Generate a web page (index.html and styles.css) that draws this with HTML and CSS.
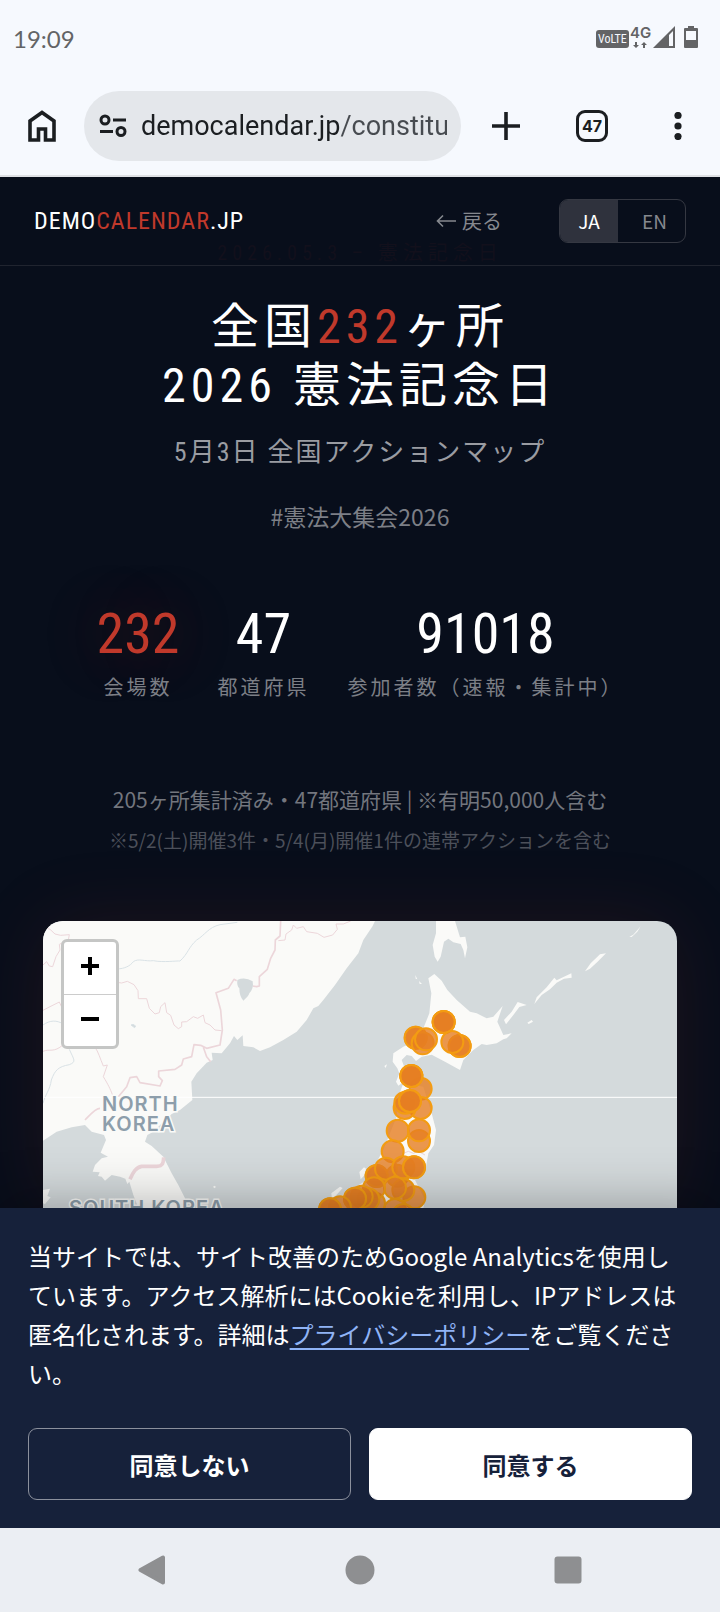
FILE: index.html
```html
<!DOCTYPE html>
<html lang="ja">
<head>
<meta charset="utf-8">
<meta name="viewport" content="width=device-width, initial-scale=1">
<title>全国232ヶ所 2026 憲法記念日</title>
<link rel="stylesheet" href="styles.css">
</head>
<body>
<div class="status">
  <span class="clock">19:09</span>
  <svg class="status-icons" width="104" height="28" viewBox="0 0 104 28" aria-hidden="true">
    <rect x="0" y="5" width="33" height="18" rx="3" fill="#636466"/>
    <text class="volte" x="2" y="18">VoLTE</text>
    <text class="net" x="34" y="13">4G</text>
    <path d="M39 17v3h-2l3 3 3-3h-2v-3zM47 23v-3h-2l3-3 3 3h-2v3z" fill="#636466"/>
    <path d="M57 23 79 1v22z" fill="#636466"/><path d="M73 10l4-4v15h-4z" fill="#f6f9fe"/>
    <path d="M92 1h6v2h3q1 0 1 1v18q0 1-1 1H89q-1 0-1-1V4q0-1 1-1h3z" fill="#636466"/><path d="M90 6h10v9h-10z" fill="#f6f9fe"/>
  </svg>
</div>
<div class="toolbar">
  <button class="tool" aria-label="ホーム"><svg width="28" height="32" viewBox="0 0 28 32"><path d="M2 30V11L14 2.500 26 11v19h-8.500V19h-7v11z" fill="none" stroke="#1b1e21" stroke-width="3.600"/></svg></button>
  <div class="omnibox">
    <svg width="28" height="24" viewBox="0 0 28 24" fill="none" stroke="#1b1e21" stroke-width="3" aria-hidden="true"><circle cx="6" cy="6" r="4"/><path d="M14 6h13M1 17.500h13"/><circle cx="22" cy="17.500" r="4"/></svg>
    <input class="url" aria-label="アドレス" value="democalendar.jp/constitution">
  </div>
  <button class="tool" aria-label="新しいタブ"><svg width="28" height="28" viewBox="0 0 28 28"><path d="M14 0v28M0 14h28" stroke="#1b1e21" stroke-width="3.600"/></svg></button>
  <button class="tool" aria-label="タブ"><span class="tabs">47</span></button>
  <button class="tool" aria-label="メニュー"><svg width="8" height="28" viewBox="0 0 8 28" fill="#1b1e21"><circle cx="4" cy="3.500" r="3.600"/><circle cx="4" cy="14" r="3.600"/><circle cx="4" cy="24.500" r="3.600"/></svg></button>
</div>

<header class="site-header">
  <a class="logo" href="#">DEMO<span class="red">CALENDAR</span>.JP</a>
  <a class="back" href="#"><svg width="20" height="14" viewBox="0 0 20 14" aria-hidden="true"><path d="M20 7H2M7 1.500 1.500 7 7 12.500" fill="none" stroke="currentColor" stroke-width="1.600"/></svg>戻る</a>
  <div class="lang">
    <button class="lang-btn active">JA</button>
    <button class="lang-btn">EN</button>
  </div>
</header>

<main class="page">
  <p class="eyebrow">2026.05.3 – 憲法記念日</p>
  <h1 class="title">全国<span class="red">232</span>ヶ所<br>2026 憲法記念日</h1>
  <p class="subtitle">5月3日 全国アクションマップ</p>
  <p class="hashtag">#憲法大集会2026</p>
  <div class="stats">
    <div class="stat"><span class="num red glow">232</span><span class="label">会場数</span></div>
    <div class="stat"><span class="num">47</span><span class="label">都道府県</span></div>
    <div class="stat"><span class="num">91018</span><span class="label">参加者数（速報・集計中）</span></div>
  </div>
  <p class="note">205ヶ所集計済み・47都道府県 | ※有明50,000人含む</p>
  <p class="note small">※5/2(土)開催3件・5/4(月)開催1件の連帯アクションを含む</p>

  <section class="map">
    <svg class="map-art" viewBox="39 33 1902 861" preserveAspectRatio="xMidYMin slice" role="img" aria-label="全国アクションマップ">
      <defs><circle id="pin" r="33" fill="#e67e22" fill-opacity=".8" stroke="#f39c12" stroke-width="6"/></defs>
      <rect x="39" y="33" width="1902" height="861" fill="#d4dadc"/>
      <path class="land" d="M39 33H1035L1028 48 1000 90 985 130 950 175 915 225 880 270 865 288 850 295 830 330 800 365 760 390 720 412 690 423 670 412 640 408 638 376 622 390 612 378 600 400 575 430 545 428 548 450 530 458 500 490 484 515 487 570 450 600 425 612 400 635 370 665 352 675 345 695 365 708 400 740 425 790 445 825 465 865V894H325L310 855 298 815 292 822 286 806 270 800 245 795 225 812 215 800 204 798 209 787 188 785 195 765 215 745 234 740 212 728 228 690 222 675 185 665 165 645 125 652 80 665 39 692ZM39 840 60 836 52 858 62 862 45 882 39 880ZM549 830l5-3 4 4-5 4z"/>
      <g transform="translate(990 0)">
        <path class="land" d="M228 33 228 70 218 105 224 140 233 155 242 140 252 95 265 86 280 97 302 102 310 120 315 145 322 112 316 80 300 82 285 33ZM223 192 205 205 214 250 208 310 190 355 175 390 130 410 100 430 98 455 112 475 118 490 108 515 115 527 132 515 140 490 125 450 140 435 155 438 168 453 185 440 215 434 255 455 300 480 310 450 340 420 365 402 380 405 410 400 430 388 440 385 455 370 430 375 412 335 428 288 400 320 380 325 350 310 330 305 290 270 262 240 245 212ZM438 343 432 330 455 305 473 276 500 285 478 291 460 315ZM523 282 530 262 560 232 583 203 590 211 634 190 635 203 612 206 590 218 570 238 545 255ZM675 184 692 160 720 133 738 130 712 156 690 176ZM808 80 820 74 842 49 832 65 815 81ZM502 338 515 330 519 335 506 342ZM166 195 172 208 167 206ZM177 213 186 222 179 222ZM73 468 81 463 77 474ZM12 772-2 786 2 808 14 795 18 776ZM-86 850-60 830-52 834-66 850-84 868Z"/>
        <path class="land" d="M130 520 190 530 215 610 228 660 222 705 205 730 198 770 165 810 195 870 190 894H-110L-60 860 20 810 70 720 110 620 115 560Z"/>
      </g>
      <g class="river"><path d="M260 177C285 176 300 168 310 155 325 144 345 155 370 152 400 158 440 152 450 153 475 130 475 112 500 90 525 75 535 52 570 44L622 37M39 345C60 330 80 330 100 342M118 418C132 450 140 455 118 464 85 470 75 480 64 510 60 540 45 555 39 580"/><path d="M303 345l6-2 8 5-3 5-6-4z" fill="#d4dadc"/></g>
      <g class="border">
        <path d="M39 50 60 58 75 72 92 76 118 74 115 90 88 103 90 120 78 140 68 170 58 168 50 155 39 165M260 217 275 219 292 214 312 224 324 242 325 266 350 266 358 295 375 312 388 308 392 290 405 278 410 308 422 316 432 345 445 356 455 350 455 336 470 335 490 320 503 325 520 315 525 338 540 345 555 360 575 362M39 301 60 290 88 276 100 302M39 424C60 415 70 430 100 404M195 412C205 425 210 445 220 468L232 465 220 500C235 525 240 535 248 556M745 92 765 90 768 72 785 60 790 45 800 55 820 50 830 65 862 70 882 82 908 75 922 58 918 42 940 42 962 33M1120 730 1135 724 1150 730 1165 724 1185 735"/>
        <path stroke-width="5" d="M752 33 750 78 736 90 735 120 722 145 712 178 688 200 688 228 680 230 668 228M620 212 612 208 595 235 558 248 572 300 577 360 570 405 530 415 512 406 492 404 485 440 460 447 455 465 435 478 386 483 386 500 397 512 390 528 330 518 320 500 300 503 290 530 265 560M520 412 530 440 542 455M210 595C195 595 180 615 165 630"/>
        <path stroke-width="11" d="M300 808C310 785 318 772 335 769H380C400 768 400 758 401 742"/>
      </g>
      <path d="M622 210Q645 200 668 214 672 235 658 250 655 260 640 272 628 260 628 235 620 228 622 210Z" fill="#d4dadc"/>
      <path d="M39 562H1941" stroke="#fff" stroke-width="3"/>
      <g class="country"><text x="216" y="603">NORTH</text><text x="216" y="662">KOREA</text><text x="117" y="914">SOUTH KOREA</text></g>
      <g transform="translate(990 0)">
        <use href="#pin" x="251" y="336"/><use href="#pin" x="251" y="336"/><use href="#pin" x="251" y="336"/>
        <use href="#pin" x="167" y="383"/><use href="#pin" x="167" y="383"/><use href="#pin" x="188" y="400"/><use href="#pin" x="198" y="388"/>
        <use href="#pin" x="299" y="408"/><use href="#pin" x="299" y="408"/><use href="#pin" x="277" y="396"/>
        <use href="#pin" x="182" y="536"/><use href="#pin" x="154" y="498"/><use href="#pin" x="154" y="498"/><use href="#pin" x="154" y="498"/>
        <use href="#pin" x="182" y="594"/><use href="#pin" x="134" y="594"/><use href="#pin" x="136" y="578"/><use href="#pin" x="150" y="573"/><use href="#pin" x="150" y="573"/>
        <use href="#pin" x="113" y="662"/><use href="#pin" x="177" y="693"/><use href="#pin" x="177" y="661"/><use href="#pin" x="98" y="724"/>
        <use href="#pin" x="112" y="797"/><use href="#pin" x="50" y="798"/><use href="#pin" x="50" y="798"/><use href="#pin" x="78" y="776"/><use href="#pin" x="130" y="772"/><use href="#pin" x="162" y="772"/><use href="#pin" x="162" y="772"/>
        <use href="#pin" x="163" y="862"/><use href="#pin" x="130" y="840"/><use href="#pin" x="105" y="833"/><use href="#pin" x="42" y="880"/><use href="#pin" x="42" y="835"/><use href="#pin" x="25" y="868"/><use href="#pin" x="5" y="860"/><use href="#pin" x="-15" y="866"/><use href="#pin" x="-15" y="866"/>
        <use href="#pin" x="-60" y="892"/><use href="#pin" x="-90" y="898"/><use href="#pin" x="-90" y="898"/><use href="#pin" x="105" y="900"/><use href="#pin" x="130" y="915"/>
      </g>
    </svg>
    <div class="zoom">
      <button class="zoom-btn" aria-label="拡大"><svg width="20" height="20" viewBox="0 0 20 20"><path d="M10 1v18M1 10h18" stroke="#000" stroke-width="4"/></svg></button>
      <button class="zoom-btn" aria-label="縮小"><svg width="20" height="20" viewBox="0 0 20 20"><path d="M1 10h18" stroke="#000" stroke-width="4"/></svg></button>
    </div>
  </section>
</main>

<section class="consent" aria-label="Cookie">
  <p class="consent-text">当サイトでは、サイト改善のためGoogle Analyticsを使用しています。アクセス解析にはCookieを利用し、IPアドレスは匿名化されます。詳細は<a class="policy" href="#">プライバシーポリシー</a>をご覧ください。</p>
  <div class="choices">
    <button class="choice">同意しない</button>
    <button class="choice agree">同意する</button>
  </div>
</section>
<nav class="sysnav">
  <button class="tool" aria-label="戻る"><svg width="28" height="30" viewBox="0 0 28 30"><path d="M25 2.500v25L2.500 15z" fill="#8e8f91" stroke="#8e8f91" stroke-width="4" stroke-linejoin="round"/></svg></button>
  <button class="tool" aria-label="ホーム画面"><svg width="30" height="30" viewBox="0 0 30 30"><circle cx="15" cy="15" r="14.500" fill="#8e8f91"/></svg></button>
  <button class="tool" aria-label="履歴"><svg width="28" height="28" viewBox="0 0 28 28"><rect x=".5" y=".5" width="27" height="27" rx="3" fill="#8e8f91"/></svg></button>
</nav>
</body>
</html>
```

FILE: styles.css
```css
* { box-sizing: border-box; }
body {
  margin: 0;
  min-height: 100vh;
  display: flex;
  flex-direction: column;
  background: #080e1b;
  color: #fff;
  font-family: "Noto Sans CJK JP", sans-serif;
  overflow-x: hidden;
}
p, h1 { margin: 0; }
button { border: 0; padding: 0; background: none; font: inherit; color: inherit; cursor: pointer; }
a { color: inherit; text-decoration: none; }
svg { display: block; flex: none; }
.red { color: #c0392b; }

.status {
  display: flex;
  align-items: center;
  justify-content: space-between;
  height: 78px;
  padding: 0 20px 0 13px;
  background: #f6f9fe;
  color: #636466;
}
.clock { font: 24px/32px Lato, sans-serif; }
.volte { font: 12px "Roboto Condensed", sans-serif; fill: #f6f9fe; }
.net { font: 600 15px Inter, sans-serif; fill: #636466; }

.toolbar {
  display: flex;
  align-items: center;
  height: 99px;
  padding: 0 0 2px;
  background: #f6f9fe;
  border-bottom: 2px solid #dfe1e5;
}
.tool { display: grid; place-items: center; width: 84px; height: 56px; }
.toolbar .tool + .tool { margin-left: 2px; }
.omnibox {
  flex: 1;
  min-width: 0;
  display: flex;
  align-items: center;
  gap: 14px;
  height: 70px;
  margin-right: 3px;
  padding: 0 14px 0 15px;
  border-radius: 35px;
  background: #e4e7eb;
}
.url {
  flex: 1;
  min-width: 0;
  height: 40px;
  padding: 0;
  border: 0;
  outline: 0;
  font: 27px/40px Roboto, sans-serif;
  color: transparent;
  background: linear-gradient(90deg, #1b1e21 199px, #474b50 199px);
  -webkit-background-clip: text;
  background-clip: text;
}
.tabs {
  display: grid;
  place-items: center;
  width: 32px;
  height: 32px;
  border: 3px solid #1b1e21;
  border-radius: 9px;
  color: #1b1e21;
  font: 700 16px/20px Inter, sans-serif;
}

.site-header {
  display: flex;
  align-items: center;
  height: 89px;
  padding: 0 34px;
  border-bottom: 1px solid #20242f;
}
.logo {
  margin-right: auto;
  font: 24px/32px "Roboto Condensed", sans-serif;
  letter-spacing: 1px;
}
.back { display: flex; align-items: center; gap: 6px; margin-right: 57px; color: #85888e; font-size: 20px; line-height: 28px; }
.lang { display: flex; height: 44px; border: 1px solid #353842; border-radius: 9px; overflow: hidden; }
.lang-btn { width: 58px; font-size: 19px; line-height: 28px; color: #85888e; }
.lang-btn + .lang-btn { width: 67px; padding-left: 6px; }
.lang .active { background: #2f323d; color: #fff; }

.page { text-align: center; padding: 0 43px; }
.eyebrow {
  margin-top: -25px;
  font: 20px/24px "Roboto Condensed", "Noto Sans CJK JP", sans-serif;
  letter-spacing: 5px;
  color: #12101c;
}
.title {
  margin-top: 32px;
  font: 400 48px/59px "Roboto Condensed", "Noto Sans CJK JP", sans-serif;
  letter-spacing: 5px;
}
.subtitle {
  margin-top: 17px;
  font: 26px/40px "Roboto Condensed", "Noto Sans CJK JP", sans-serif;
  letter-spacing: 2px;
  color: #9a9ca2;
}
.hashtag { margin-top: 26px; font-size: 23px; line-height: 36px; color: #7c7f86; }
.stats { display: flex; justify-content: center; gap: 38px; margin-top: 68px; }
.stat { display: flex; flex-direction: column; align-items: center; gap: 6px; }
.num { font: 56px/64px "Roboto Condensed", sans-serif; }
.glow { text-shadow: 0 0 60px rgba(192, 57, 43, .4); }
.label { font-size: 20px; line-height: 30px; letter-spacing: 3px; color: #7c7f86; }
.note { margin-top: 80px; font-size: 21px; line-height: 34px; color: #73767e; }
.note.small { margin-top: 7px; font-size: 19px; color: #4c505a; }

.map {
  position: relative;
  margin-top: 64px;
  border-radius: 20px 20px 0 0;
  box-shadow: 0 0 80px rgba(192, 57, 43, .12);
}
.map-art { width: 100%; border-radius: 20px 20px 0 0; overflow: hidden; }
.land { fill: #fafaf8; }
.river { fill: none; stroke: #d9e2e6; stroke-width: 3; }
.border { fill: none; stroke: #ecd6da; stroke-width: 3; stroke-linejoin: round; }
.country {
  font: 600 60px Inter, sans-serif;
  letter-spacing: 3px;
  fill: #8d9eab;
  stroke: #fafaf8;
  stroke-width: 9px;
  paint-order: stroke;
}
.zoom {
  position: absolute;
  left: 18px;
  top: 18px;
  width: 58px;
  border: 3px solid #c5c6c5;
  border-radius: 6px;
  background: #fff;
}
.zoom-btn { display: grid; place-items: center; width: 100%; height: 52px; padding-bottom: 4px; }
.zoom-btn + .zoom-btn { border-top: 1px solid #ccc; }

.consent {
  position: relative;
  flex: 1;
  padding: 28px;
  background: #16213a;
  box-shadow: 0 -4px 50px rgba(0, 0, 0, .3);
}
.consent-text { font-size: 24px; line-height: 39px; }
.policy { color: #8fb3f5; text-decoration: underline; text-underline-offset: 4px; }
.choices { display: flex; gap: 18px; margin-top: 36px; }
.choice {
  flex: 1;
  height: 72px;
  border: 1px solid #8b909c;
  border-radius: 9px;
  font-size: 24px;
  font-weight: 700;
}
.agree { border-color: #fff; background: #fff; color: #16213a; }

.sysnav {
  position: relative;
  display: flex;
  align-items: center;
  justify-content: center;
  gap: 124px;
  height: 84px;
  background: #ebeef3;
}
```
